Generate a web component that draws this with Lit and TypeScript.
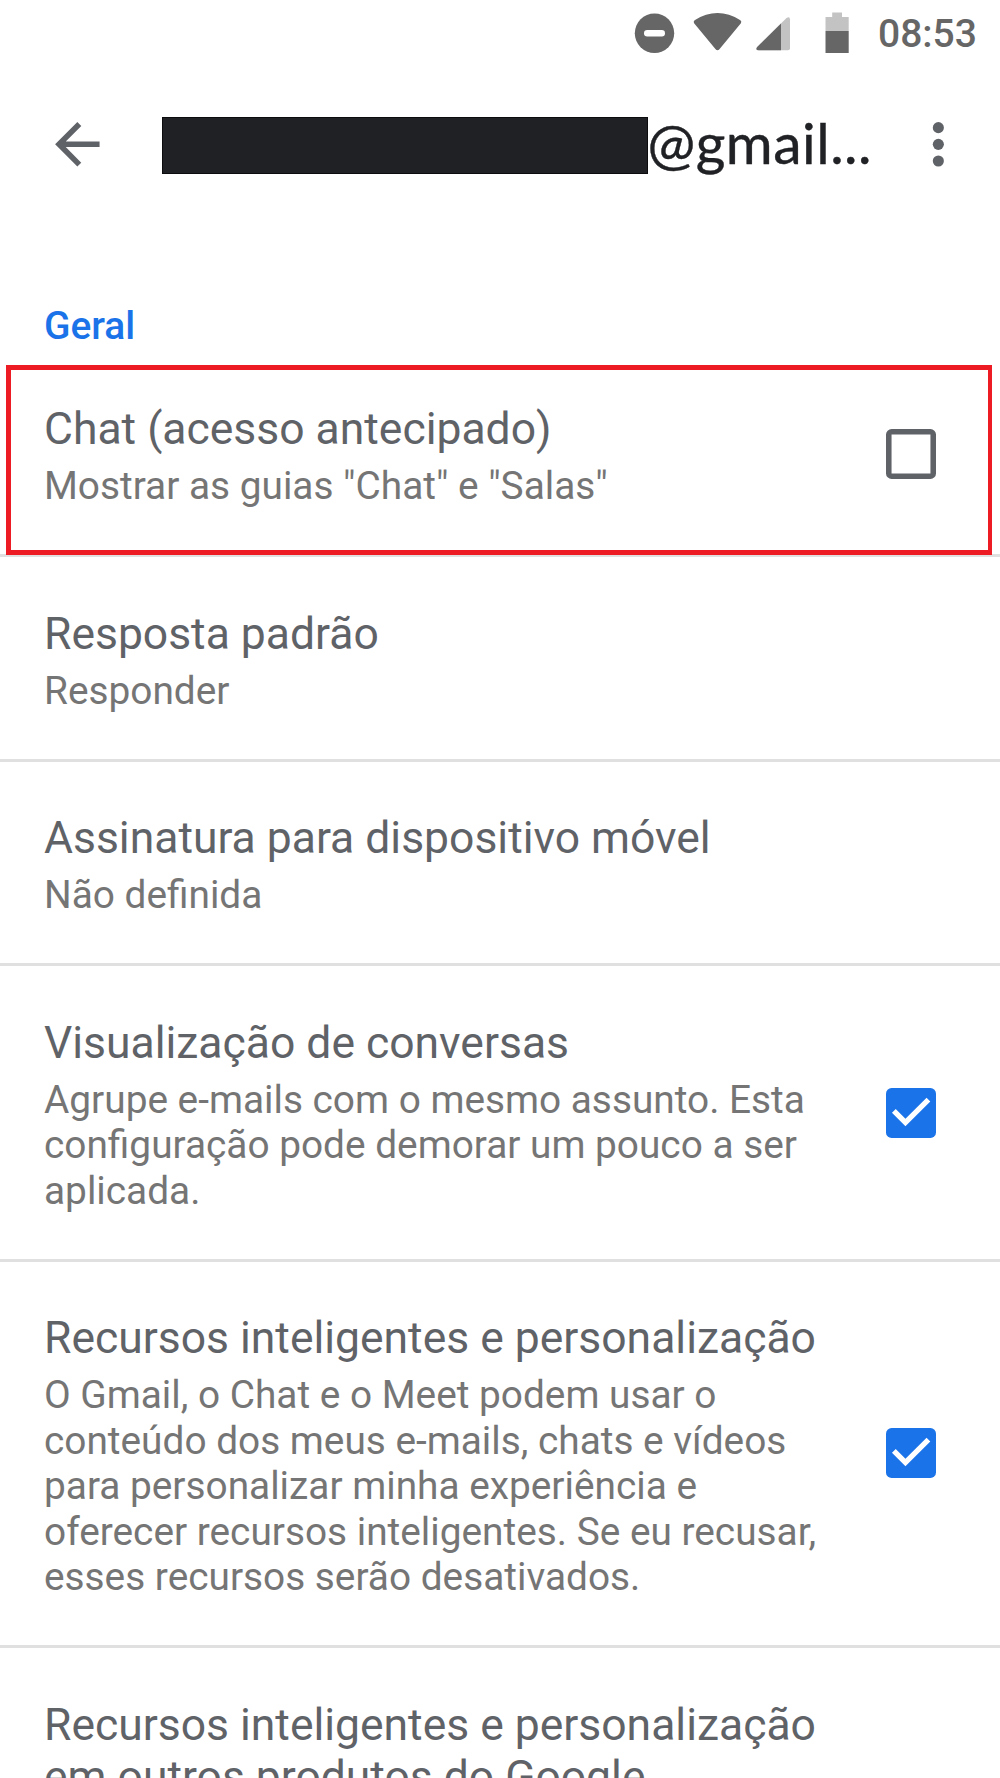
import { LitElement, html, css, svg, nothing } from "lit";
import { customElement, property } from "lit/decorators.js";

interface Setting {
  title: string;
  detail?: string;
  checked?: boolean;
  highlighted?: boolean;
}

const SETTINGS: Setting[] = [
  {
    title: "Chat (acesso antecipado)",
    detail: 'Mostrar as guias "Chat" e "Salas"',
    checked: false,
    highlighted: true,
  },
  { title: "Resposta padrão", detail: "Responder" },
  { title: "Assinatura para dispositivo móvel", detail: "Não definida" },
  {
    title: "Visualização de conversas",
    detail: "Agrupe e-mails com o mesmo assunto. Esta configuração pode demorar um pouco a ser aplicada.",
    checked: true,
  },
  {
    title: "Recursos inteligentes e personalização",
    detail:
      "O Gmail, o Chat e o Meet podem usar o conteúdo dos meus e-mails, chats e vídeos para personalizar minha experiência e oferecer recursos inteligentes. Se eu recusar, esses recursos serão desativados.",
    checked: true,
  },
  { title: "Recursos inteligentes e personalização em outros produtos do Google" },
];

@customElement("status-bar")
class StatusBar extends LitElement {
  static styles = css`
    :host {
      display: flex;
      align-items: center;
      justify-content: flex-end;
      height: 68px;
      padding-right: 23px;
      box-sizing: border-box;
    }
    .icons {
      display: block;
      width: 220px;
      height: 68px;
      margin-right: 18px;
      overflow: visible;
    }
    .time {
      width: 99px;
      font-size: 39px;
      font-weight: 500;
      line-height: 70px;
      color: #666;
      white-space: nowrap;
    }
  `;
  render() {
    return html`
      <svg class="icons" viewBox="0 0 220 68" fill="#666">
        ${svg`
          <circle cx="14.5" cy="33.2" r="19.7" />
          <rect x="4" y="30" width="21" height="6.4" rx="3.2" fill="#fff" />
          <path d="M54.6 20.2Q77.5 6 100.4 20.2Q102 21.6 100.9 23.2L79.6 49Q77.5 51.6 75.4 49L54.1 23.2Q53 21.6 54.6 20.2z" />
          <path d="M118.6 50.3Q115 50 117.2 47L146.5 18Q149.8 15.7 150 19.5V48.3Q150 50.3 148 50.3z" fill="#c3c3c3" />
          <path d="M118.6 50.3Q115 50 117.2 47L141 23.5V50.3z" />
          <path d="M185.5 17h6.7v-4.6h9.8V17h6.7v14h-23.2z" fill="#c3c3c3" />
          <path d="M185.5 31h23.2v22h-23.2z" />
        `}
      </svg>
      <span class="time">08:53</span>
    `;
  }
}

@customElement("app-bar")
class AppBar extends LitElement {
  static styles = css`
    :host {
      display: flex;
      align-items: center;
      height: 152px;
      padding: 0 28.5px 0 44px;
      box-sizing: border-box;
    }
    .icon {
      flex: none;
      display: block;
      width: 66.7px;
      height: 66.7px;
      fill: #5f6368;
    }
    .account {
      flex: 1;
      min-width: 0;
      display: flex;
      align-items: center;
      margin-left: 51.8px;
    }
    .redacted {
      flex: none;
      width: 486px;
      height: 57px;
      margin-top: 3px;
      background: #202124;
      box-shadow: inset 0 0 0 1px #0c0c0e;
    }
    .domain {
      margin: -4px 0 0 -1px;
      font-family: Lato, Roboto, sans-serif;
      font-size: 57px;
      line-height: 66px;
      letter-spacing: 0.5px;
      -webkit-text-stroke: 0.4px #202124;
      color: #202124;
      white-space: nowrap;
    }
  `;
  render() {
    return html`
      <svg class="icon" viewBox="0 0 24 24">
        <path d="M20 11H7.83l5.59-5.59L12 4l-8 8 8 8 1.41-1.41L7.83 13H20v-2z" />
      </svg>
      <div class="account">
        <span class="redacted"></span>
        <span class="domain">@gmail...</span>
      </div>
      <svg class="icon" viewBox="0 0 24 24">
        <circle cx="12" cy="6" r="2" />
        <circle cx="12" cy="12" r="2" />
        <circle cx="12" cy="18" r="2" />
      </svg>
    `;
  }
}

@customElement("check-box")
class CheckBox extends LitElement {
  @property({ type: Boolean }) checked = false;
  static styles = css`
    :host {
      display: block;
      width: 50px;
      height: 50px;
    }
    .box {
      display: block;
      width: 50px;
      height: 50px;
    }
  `;
  render() {
    return html`
      <svg class="box" viewBox="3 3 18 18">
        ${this.checked
          ? svg`<rect x="3" y="3" width="18" height="18" rx="2" fill="#1a73e8" />
              <path d="M10 16.8l-4.85-4.85 1.35-1.35L10 14.1l7.6-7.6 1.35 1.35z" fill="#fff" />`
          : svg`<rect x="4" y="4" width="16" height="16" rx="1" fill="none" stroke="#5f6368" stroke-width="2" />`}
      </svg>
    `;
  }
}

@customElement("setting-row")
class SettingRow extends LitElement {
  @property({ attribute: false }) setting!: Setting;
  static styles = css`
    :host {
      display: block;
    }
    .row {
      position: relative;
      display: flex;
      align-items: center;
      box-sizing: border-box;
      padding: 50.7px 64.5px 45.3px 44px;
      border-bottom: 3px solid #e0e0e0;
    }
    .text {
      width: 780px;
      flex: none;
    }
    .title {
      font-size: 44.44px;
      line-height: 52.1px;
      color: #5f6368;
    }
    .detail {
      margin-top: 7.9px;
      font-size: 38.8px;
      line-height: 45.5px;
      color: #757575;
    }
    .control {
      margin: -29px 0 -24px auto;
    }
    .highlight {
      position: absolute;
      left: 6px;
      right: 8px;
      top: 12px;
      bottom: -1px;
      border: 5px solid #ed1c24;
      border-width: 5px 4px 5px 5px;
      z-index: 1;
    }
  `;
  render() {
    const s = this.setting;
    return html`
      <div class="row">
        <div class="text">
          <div class="title">${s.title}</div>
          ${s.detail ? html`<div class="detail">${s.detail}</div>` : nothing}
        </div>
        ${s.checked === undefined
          ? nothing
          : html`<check-box class="control" ?checked=${s.checked}></check-box>`}
        ${s.highlighted ? html`<div class="highlight"></div>` : nothing}
      </div>
    `;
  }
}

@customElement("app-root")
class AppRoot extends LitElement {
  static styles = css`
    :host {
      display: block;
      width: 1000px;
      height: 1778px;
      overflow: hidden;
      background: #fff;
      font-family: Roboto, sans-serif;
    }
    .section {
      box-sizing: border-box;
      height: 132.7px;
      padding: 83px 0 0 44px;
      font-size: 38.89px;
      font-weight: 500;
      line-height: 45.57px;
      color: #1a73e8;
    }
  `;
  render() {
    return html`
      <status-bar></status-bar>
      <app-bar></app-bar>
      <div class="section">Geral</div>
      ${SETTINGS.map((s) => html`<setting-row .setting=${s}></setting-row>`)}
    `;
  }
}
